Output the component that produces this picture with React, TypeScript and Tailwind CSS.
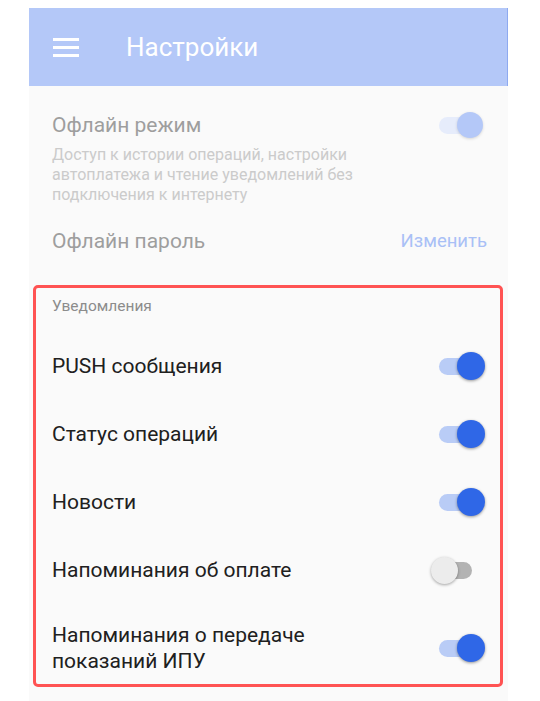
import React from "react";

function Toggle({ on, faded }: { on: boolean; faded?: boolean }) {
  if (!on) {
    return (
      <div className="relative w-[46px] h-[28px] flex items-center">
        <div className="absolute left-[2px] w-[31px] h-[17px] rounded-full bg-[#b3b3b3]" />
        <div className="absolute left-[-8px] w-[27px] h-[27px] rounded-full bg-[#ececec] shadow-[0_1px_3px_rgba(0,0,0,0.35)]" />
      </div>
    );
  }
  return (
    <div className={faded ? "relative w-[44px] h-[28px] mr-[4px] flex items-center" : "relative w-[46px] h-[28px] flex items-center"}>
      <div
        className={
          faded
            ? "absolute left-0 w-[32px] h-[17px] rounded-full bg-[#e6ecfb]"
            : "absolute left-0 w-[34px] h-[17px] rounded-full bg-[#b9ccf6]"
        }
      />
      <div
        className={
          faded
            ? "absolute right-0 w-[26px] h-[26px] rounded-full bg-[#b4c8f8] shadow-[0_1px_3px_rgba(0,0,0,0.15)]"
            : "absolute right-0 w-[28px] h-[28px] rounded-full bg-[#2f67e7] shadow-[0_1px_3px_rgba(0,0,0,0.4)]"
        }
      />
    </div>
  );
}

const rows = [
  { label: "PUSH сообщения", on: true },
  { label: "Статус операций", on: true },
  { label: "Новости", on: true },
  { label: "Напоминания об оплате", on: false },
];

export default function App() {
  return (
    <div className="w-[540px] h-[701px] bg-white overflow-hidden font-['Roboto',sans-serif]">
      <div className="ml-[29px] mt-[8px] w-[479px] h-[693px] bg-[#fafafa]">
        {/* toolbar */}
        <div className="h-[78px] bg-[#b4c8f8] border-r border-[#8eaaf0] flex items-center">
          <div className="ml-[24px] w-[26px] flex flex-col gap-[5px]">
            <div className="h-[3px] bg-white" />
            <div className="h-[3px] bg-white" />
            <div className="h-[3px] bg-white" />
          </div>
          <h1 className="ml-[47px] text-[26px] text-white leading-none">Настройки</h1>
        </div>

        {/* offline section, disabled look */}
        <div className="pl-[23px] pr-[21px] pt-[25px]">
          <div className="flex items-center justify-between">
            <span className="text-[21px] leading-[28px] text-[#9e9e9e]">Офлайн режим</span>
            <Toggle on faded />
          </div>
          <p className="mt-[6px] text-[16px] leading-[20px] text-[#cbcbcb] w-[320px]">
            Доступ к истории операций, настройки автоплатежа и чтение уведомлений без подключения к интернету
          </p>
          <div className="mt-[22px] flex items-center justify-between">
            <span className="text-[21px] leading-[28px] text-[#9e9e9e]">Офлайн пароль</span>
            <span className="text-[18.5px] leading-[28px] text-[#a9c0f6]">Изменить</span>
          </div>
        </div>

        {/* notifications */}
        <div className="mt-[30px] ml-[4px] w-[470px] border-[3px] border-[#ff5353] rounded-[5px] pl-[16px] pr-[15px] pt-[8px]">
          <div className="text-[15.5px] leading-[20px] text-[#8c8c8c]">Уведомления</div>
          <div className="mt-[16px]">
            {rows.map((r) => (
              <div key={r.label} className="h-[68px] flex items-center justify-between">
                <span className="text-[21px] leading-[28px] text-[#202020]">{r.label}</span>
                <Toggle on={r.on} />
              </div>
            ))}
            <div className="pt-[18px] pb-[10px] flex items-center justify-between">
              <span className="text-[21px] leading-[26px] text-[#202020]">
                Напоминания о передаче
                <br />
                показаний ИПУ
              </span>
              <Toggle on />
            </div>
          </div>
        </div>
      </div>
    </div>
  );
}
